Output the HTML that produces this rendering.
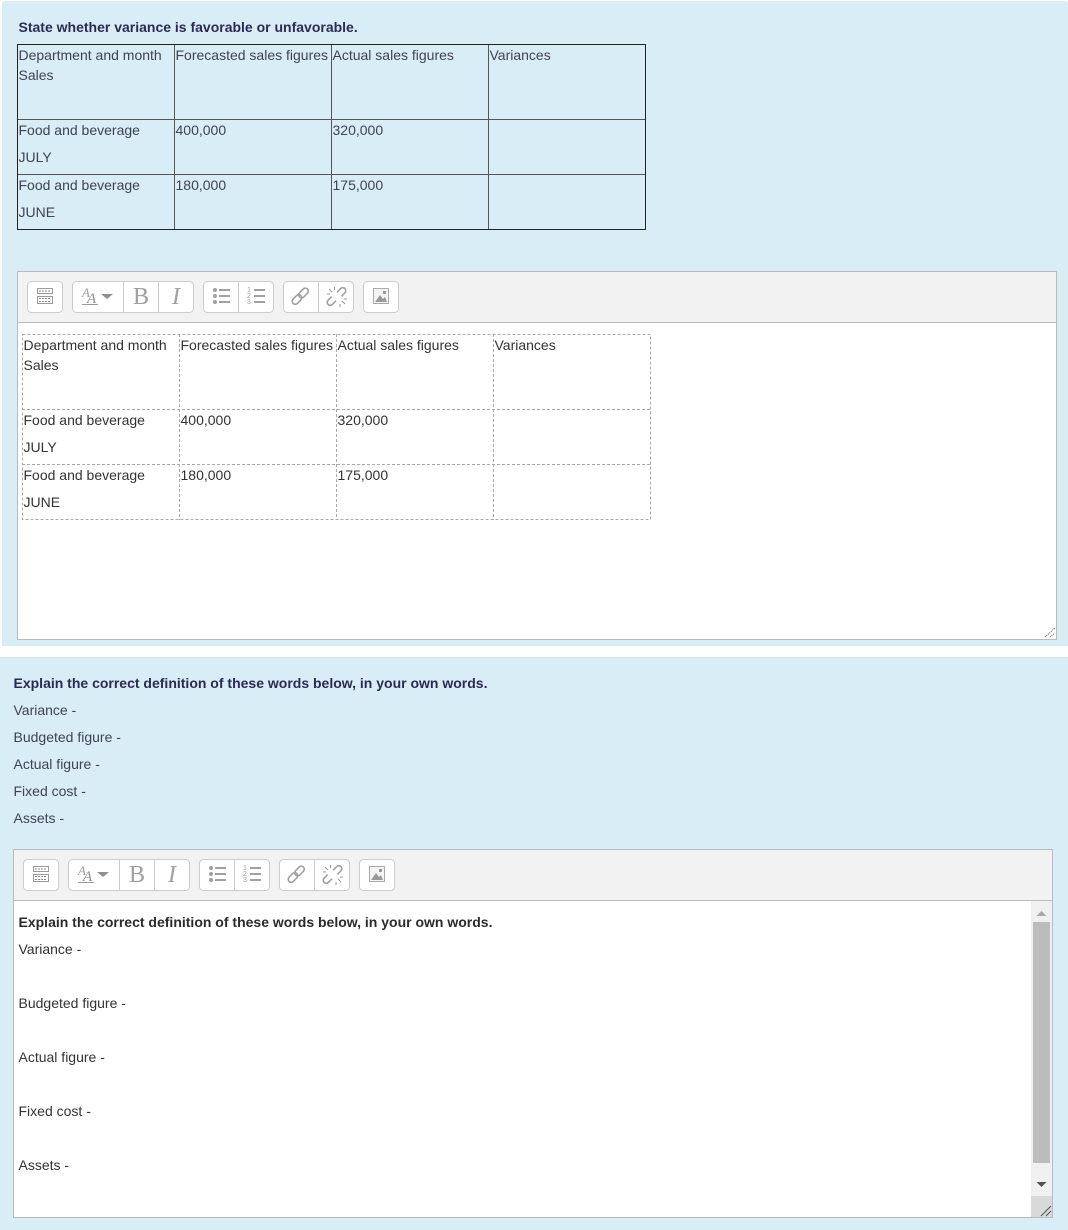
<!DOCTYPE html>
<html><head><meta charset="utf-8"><style>
html,body{margin:0;padding:0;background:#fff;}
#p{position:relative;width:1068px;height:1230px;overflow:hidden;background:#fff;font-family:"Liberation Sans",Arial,sans-serif;font-size:14px;color:#333;}
.b{position:absolute;box-sizing:border-box;}
.t{position:absolute;line-height:20px;white-space:nowrap;margin-left:.5px;}
.q{color:#3f4255;}
.h{font-weight:bold;color:#2c2a55;}
.k{font-weight:bold;color:#2b2b2b;}
svg{position:absolute;display:block;}
</style></head><body><div id="p">
<div class="b" style="left:2px;top:1px;width:1066px;height:645px;background:#d9edf6;border-radius:3px 3px 0 0;"></div>
<div class="b" style="left:0;top:657px;width:1068px;height:573px;background:#d9edf6;border-top:1px solid #cfe5ec;"></div>

<span class="t h" style="left:18px;top:17px;">State whether variance is favorable or unfavorable.</span>

<!-- table 1 -->
<svg style="left:0;top:0" width="660" height="240"><g fill="none" stroke-width="1" shape-rendering="crispEdges"><path stroke="#555" d="M174.5 44V230M331.5 44V230M488.5 44V230M17 119.5H646M17 174.5H646"/><rect stroke="#222" x="17.5" y="44.5" width="628" height="185"/></g></svg>
<span class="t q" style="left:18px;top:45px;">Department and month</span>
<span class="t q" style="left:18px;top:65px;">Sales</span>
<span class="t q" style="left:175px;top:45px;">Forecasted sales figures</span>
<span class="t q" style="left:332px;top:45px;">Actual sales figures</span>
<span class="t q" style="left:489px;top:45px;">Variances</span>
<span class="t q" style="left:18px;top:120px;">Food and beverage</span>
<span class="t q" style="left:18px;top:147px;">JULY</span>
<span class="t q" style="left:175px;top:120px;">400,000</span>
<span class="t q" style="left:332px;top:120px;">320,000</span>
<span class="t q" style="left:18px;top:175px;">Food and beverage</span>
<span class="t q" style="left:18px;top:202px;">JUNE</span>
<span class="t q" style="left:175px;top:175px;">180,000</span>
<span class="t q" style="left:332px;top:175px;">175,000</span>

<!-- editor 1 -->
<div class="b" style="left:17px;top:271px;width:1040px;height:369px;background:#fff;border:1px solid #b8bcbf;"></div>
<div class="b" style="left:18px;top:272px;width:1038px;height:51px;background:#f2f2f2;border-bottom:1px solid #bbb;"></div>
<svg style="left:17px;top:271px" width="400" height="52" font-family="'Liberation Serif',serif" fill="#a0a0a0">
<g fill="#fff" stroke="#ccc"><rect x="10.5" y="10.5" width="35" height="31" rx="4"/><rect x="55.5" y="10.5" width="121" height="31" rx="4"/><rect x="186.5" y="10.5" width="70" height="31" rx="4"/><rect x="266.5" y="10.5" width="70" height="31" rx="4"/><rect x="346.5" y="10.5" width="35" height="31" rx="4"/></g>
<path d="M106.5 11V41M141.5 11V41M221.5 11V41M301.5 11V41" stroke="#ccc" fill="none"/>
<g fill="none" stroke="#999"><rect x="20.5" y="17.5" width="15" height="5"/><rect x="20.5" y="25.5" width="15" height="7"/></g>
<path d="M22 20h12M22 27.500h12M22 30.500h12" stroke="#888" stroke-dasharray="2 1" fill="none"/>
<text x="65" y="26" font-size="13" font-style="italic">A</text><text x="70" y="32" font-size="15" font-style="italic" fill="#909090">A</text>
<path d="M65 33.500H81" stroke="#999"/><path d="M84 23H96L90 28Z" fill="#909090"/>
<text x="116" y="33" font-size="24">B</text><text x="155" y="33" font-size="24" font-style="italic">I</text>
<circle cx="198" cy="19" r="2"/><circle cx="198" cy="25" r="2"/><circle cx="198" cy="31" r="2"/>
<path d="M202 19h11M202 25h11M202 31h11M237 19h11M237 25h11M237 31h11" stroke="#a0a0a0" stroke-width="2" fill="none"/>
<g font-family="'Liberation Sans',sans-serif" font-size="7"><text x="230" y="21">1</text><text x="230" y="27">2</text><text x="230" y="33">3</text></g>
<g fill="none" stroke="#a0a0a0" stroke-width="1.600">
<rect x="-5.500" y="-3" width="11" height="6" rx="3" transform="translate(280 28.500) rotate(-45)"/><rect x="-5.500" y="-3" width="11" height="6" rx="3" transform="translate(286.500 22) rotate(-45)"/>
<rect x="-5.500" y="-3" width="11" height="6" rx="3" stroke-dasharray="5 9 16 0" transform="translate(315 29.500) rotate(-45)"/><rect x="-5.500" y="-3" width="11" height="6" rx="3" stroke-dasharray="19 11" transform="translate(324 21.500) rotate(-45)"/></g>
<path d="M312 18l3 3M317.500 16v3M310 23h3M328 33l-3-3M323 36v-3M330 28h-3" stroke="#999" fill="none"/>
<rect x="356.500" y="17.500" width="15" height="15" fill="#f4f4f4" stroke="#aaa"/><path d="M358 31l5-7 3 4 2-2 2 5Z" fill="#999"/><rect x="366" y="20" width="3" height="3" fill="#999"/>
</svg>

<!-- table 2 -->
<svg style="left:17px;top:325px" width="650" height="200"><g stroke="#aaa" stroke-width="1" fill="none" stroke-dasharray="3 2" shape-rendering="crispEdges"><rect x="5.500" y="9.500" width="628" height="185"/><path d="M162.500 9V195M319.500 9V195M476.500 9V195M5 84.500H634M5 139.500H634"/></g></svg>
<span class="t" style="left:23px;top:335px;">Department and month</span>
<span class="t" style="left:23px;top:355px;">Sales</span>
<span class="t" style="left:180px;top:335px;">Forecasted sales figures</span>
<span class="t" style="left:337px;top:335px;">Actual sales figures</span>
<span class="t" style="left:494px;top:335px;">Variances</span>
<span class="t" style="left:23px;top:410px;">Food and beverage</span>
<span class="t" style="left:23px;top:437px;">JULY</span>
<span class="t" style="left:180px;top:410px;">400,000</span>
<span class="t" style="left:337px;top:410px;">320,000</span>
<span class="t" style="left:23px;top:465px;">Food and beverage</span>
<span class="t" style="left:23px;top:492px;">JUNE</span>
<span class="t" style="left:180px;top:465px;">180,000</span>
<span class="t" style="left:337px;top:465px;">175,000</span>
<svg style="left:1040px;top:625px" width="16" height="14"><path d="M5 12L15 3M10 12L15 8" stroke="#666" stroke-dasharray="1 1" fill="none"/></svg>

<!-- panel 2 text -->
<span class="t h" style="left:13px;top:673px;">Explain the correct definition of these words below, in your own words.</span>
<span class="t q" style="left:13px;top:700px;">Variance -</span>
<span class="t q" style="left:13px;top:727px;">Budgeted figure -</span>
<span class="t q" style="left:13px;top:754px;">Actual figure -</span>
<span class="t q" style="left:13px;top:781px;">Fixed cost -</span>
<span class="t q" style="left:13px;top:808px;">Assets -</span>

<!-- editor 2 -->
<div class="b" style="left:13px;top:849px;width:1040px;height:369px;background:#fff;border:1px solid #b8bcbf;"></div>
<div class="b" style="left:14px;top:850px;width:1038px;height:51px;background:#f2f2f2;border-bottom:1px solid #bbb;"></div>
<svg style="left:13px;top:849px" width="400" height="52" font-family="'Liberation Serif',serif" fill="#a0a0a0">
<g fill="#fff" stroke="#ccc"><rect x="10.5" y="10.5" width="35" height="31" rx="4"/><rect x="55.5" y="10.5" width="121" height="31" rx="4"/><rect x="186.5" y="10.5" width="70" height="31" rx="4"/><rect x="266.5" y="10.5" width="70" height="31" rx="4"/><rect x="346.5" y="10.5" width="35" height="31" rx="4"/></g>
<path d="M106.5 11V41M141.5 11V41M221.5 11V41M301.5 11V41" stroke="#ccc" fill="none"/>
<g fill="none" stroke="#999"><rect x="20.5" y="17.5" width="15" height="5"/><rect x="20.5" y="25.5" width="15" height="7"/></g>
<path d="M22 20h12M22 27.500h12M22 30.500h12" stroke="#888" stroke-dasharray="2 1" fill="none"/>
<text x="65" y="26" font-size="13" font-style="italic">A</text><text x="70" y="32" font-size="15" font-style="italic" fill="#909090">A</text>
<path d="M65 33.500H81" stroke="#999"/><path d="M84 23H96L90 28Z" fill="#909090"/>
<text x="116" y="33" font-size="24">B</text><text x="155" y="33" font-size="24" font-style="italic">I</text>
<circle cx="198" cy="19" r="2"/><circle cx="198" cy="25" r="2"/><circle cx="198" cy="31" r="2"/>
<path d="M202 19h11M202 25h11M202 31h11M237 19h11M237 25h11M237 31h11" stroke="#a0a0a0" stroke-width="2" fill="none"/>
<g font-family="'Liberation Sans',sans-serif" font-size="7"><text x="230" y="21">1</text><text x="230" y="27">2</text><text x="230" y="33">3</text></g>
<g fill="none" stroke="#a0a0a0" stroke-width="1.600">
<rect x="-5.500" y="-3" width="11" height="6" rx="3" transform="translate(280 28.500) rotate(-45)"/><rect x="-5.500" y="-3" width="11" height="6" rx="3" transform="translate(286.500 22) rotate(-45)"/>
<rect x="-5.500" y="-3" width="11" height="6" rx="3" stroke-dasharray="5 9 16 0" transform="translate(315 29.500) rotate(-45)"/><rect x="-5.500" y="-3" width="11" height="6" rx="3" stroke-dasharray="19 11" transform="translate(324 21.500) rotate(-45)"/></g>
<path d="M312 18l3 3M317.500 16v3M310 23h3M328 33l-3-3M323 36v-3M330 28h-3" stroke="#999" fill="none"/>
<rect x="356.500" y="17.500" width="15" height="15" fill="#f4f4f4" stroke="#aaa"/><path d="M358 31l5-7 3 4 2-2 2 5Z" fill="#999"/><rect x="366" y="20" width="3" height="3" fill="#999"/>
</svg>

<span class="t k" style="left:18px;top:912px;">Explain the correct definition of these words below, in your own words.</span>
<span class="t" style="left:18px;top:939px;">Variance -</span>
<span class="t" style="left:18px;top:993px;">Budgeted figure -</span>
<span class="t" style="left:18px;top:1047px;">Actual figure -</span>
<span class="t" style="left:18px;top:1101px;">Fixed cost -</span>
<span class="t" style="left:18px;top:1155px;">Assets -</span>

<!-- scrollbar -->
<div class="b" style="left:1031px;top:901px;width:21px;height:295px;background:#f0f0f0;"></div>
<div class="b" style="left:1033px;top:922px;width:17px;height:241px;background:#bcbcbc;"></div>
<svg style="left:1031px;top:901px" width="21" height="316"><path d="M5.500 15L10.500 10L15.500 15Z" fill="#a8a8a8"/><path d="M5.500 281H15.500L10.500 286Z" fill="#505050"/><rect x="0" y="295" width="21" height="21" fill="#d9d9d9"/><path d="M10 315L20 305M15 315L20 310" stroke="#555" fill="none"/></svg>
</div></body></html>
